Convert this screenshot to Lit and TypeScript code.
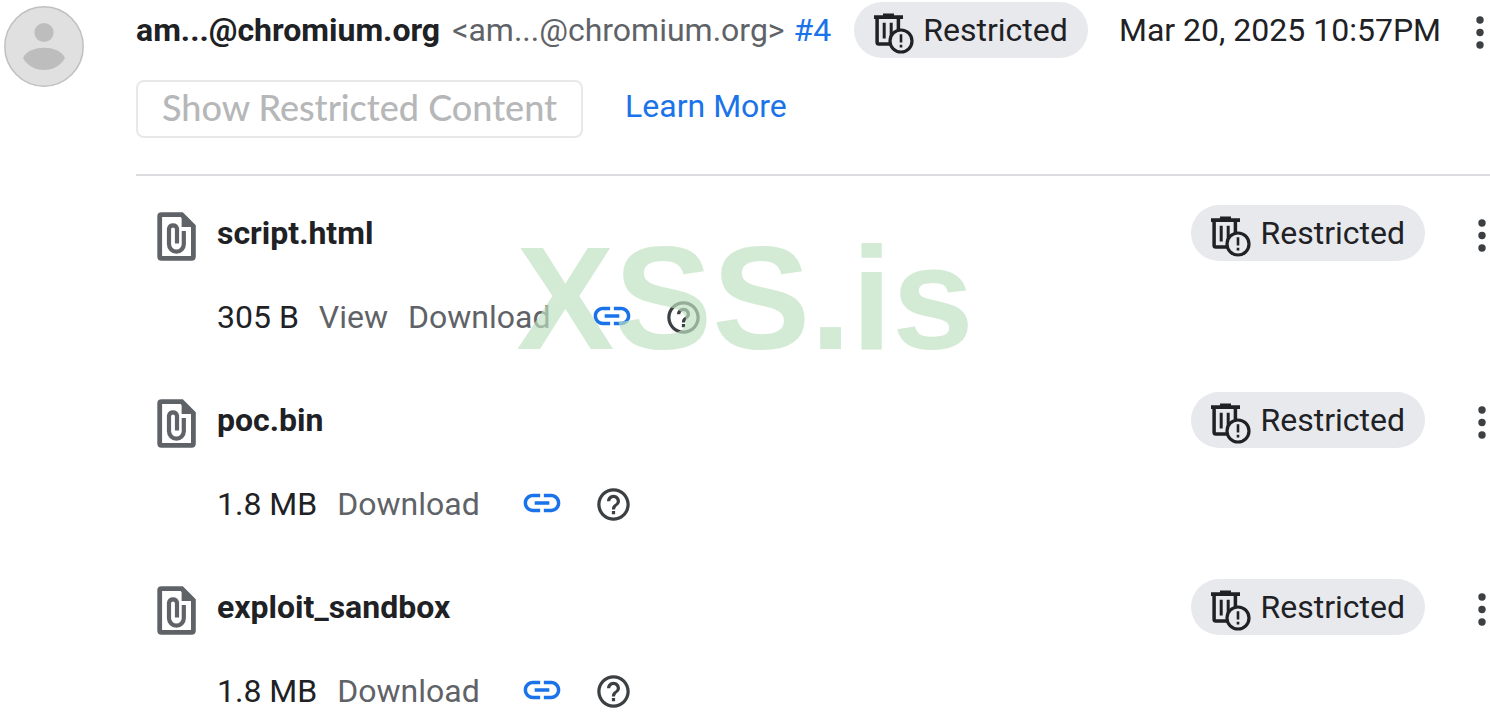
import { LitElement, html, css, svg } from "lit";
import { customElement, property } from "lit/decorators.js";

interface Attachment {
  name: string;
  size: string;
  viewable: boolean;
}

const ATTACHMENTS: Attachment[] = [
  { name: "script.html", size: "305 B", viewable: true },
  { name: "poc.bin", size: "1.8 MB", viewable: false },
  { name: "exploit_sandbox", size: "1.8 MB", viewable: false },
];

const dots = svg`
  <circle cx="4" cy="4" r="3.7" />
  <circle cx="4" cy="16.5" r="3.7" />
  <circle cx="4" cy="29" r="3.7" />
`;

@customElement("restricted-chip")
class RestrictedChip extends LitElement {
  static styles = css`
    :host {
      display: inline-flex;
      flex: none;
      align-items: center;
      box-sizing: border-box;
      height: 56px;
      padding: 0 20px;
      gap: 9px;
      border-radius: 28px;
      background: #e8e9ed;
      color: #202124;
      white-space: nowrap;
    }
    .icon {
      display: block;
      width: 40px;
      height: 41px;
      margin-top: 6px;
    }
  `;
  render() {
    return html`
      <svg class="icon" viewBox="0 0 40 41" fill="none" stroke="#202124" aria-hidden="true">
        <path d="M0 4.1H29M9 2.2H20" stroke-width="3.6" />
        <path d="M3.1 5V29.2Q3.1 31 4.9 31H22.6Q24.4 31 24.4 29.2V5" stroke-width="3.5" />
        <path d="M10.2 9.7V25.6M17.2 9.7V25.6" stroke-width="3" />
        <circle cx="27" cy="28" r="11" fill="#e8e9ed" stroke-width="3.2" />
        <path d="M27 21.2V29.4M27 31.8V34.4" stroke-width="2.6" />
      </svg>
      <span>Restricted</span>
    `;
  }
}

@customElement("attachment-item")
class AttachmentItem extends LitElement {
  @property({ attribute: false }) item!: Attachment;

  static styles = css`
    :host {
      display: block;
    }
    .top,
    .meta {
      display: flex;
      align-items: center;
      height: 56px;
    }
    .file {
      flex: none;
      width: 39px;
      height: 49px;
      margin: 6px 21px 0 21px;
    }
    .name {
      flex: 1;
      font-weight: 700;
      color: #202124;
    }
    .more {
      display: flex;
      flex: none;
      margin: 5px 4px 0 53px;
      padding: 0;
      border: 0;
      background: none;
      fill: #3c4043;
    }
    .meta {
      margin-top: 28px;
      padding-left: 81px;
      gap: 20px;
      color: #202124;
    }
    .action {
      color: #5f6368;
      text-decoration: none;
    }
    .link {
      display: flex;
      margin: 0 10px 2px 20px;
    }
    .help {
      display: flex;
      padding: 0;
      border: 0;
      background: none;
    }
  `;
  render() {
    const { name, size, viewable } = this.item;
    return html`
      <div class="top">
        <svg class="file" viewBox="0 0 39 49" fill="none" stroke="#5f6368" aria-hidden="true">
          <path d="M2.7 4.5Q2.7 2.7 4.5 2.7H24.8L36.4 14.3V44.5Q36.4 46.300 34.6 46.300H4.5Q2.7 46.300 2.7 44.5Z" stroke-width="4.8" />
          <path d="M24.600 1V15H38Z" fill="#5f6368" stroke="none" />
          <path d="M26.8 19V32.2A7.4 7.4 0 0 1 12 32.2V16.6A4.1 4.1 0 0 1 20 16.6V31.6" stroke-width="4.2" />
        </svg>
        <span class="name">${name}</span>
        <restricted-chip></restricted-chip>
        <button class="more" aria-label="More options">
          <svg width="8" height="33" viewBox="0 0 8 33">${dots}</svg>
        </button>
      </div>
      <div class="meta">
        <span>${size}</span>
        ${viewable ? html`<a class="action" href="#view">View</a>` : null}
        <a class="action" href="#download">Download</a>
        <a class="link" href="#link" aria-label="Copy link">
          <svg width="44" height="44" viewBox="0 0 24 24" fill="#1a73e8">
            <path d="M3.9 12c0-1.71 1.39-3.1 3.1-3.1h4V7H7c-2.76 0-5 2.24-5 5s2.24 5 5 5h4v-1.9H7c-1.71 0-3.1-1.39-3.1-3.1zM8 13h8v-2H8v2zm9-6h-4v1.9h4c1.71 0 3.1 1.39 3.1 3.1s-1.39 3.1-3.1 3.1h-4V17h4c2.76 0 5-2.24 5-5s-2.24-5-5-5z" />
          </svg>
        </a>
        <button class="help" aria-label="Help">
          <svg width="39" height="39" viewBox="0 0 24 24" fill="#3c4043">
            <path d="M11 18h2v-2h-2v2zm1-16C6.48 2 2 6.48 2 12s4.48 10 10 10 10-4.48 10-10S17.52 2 12 2zm0 18c-4.41 0-8-3.59-8-8s3.59-8 8-8 8 3.59 8 8-3.59 8-8 8zm0-14c-2.21 0-4 1.79-4 4h2c0-1.1.9-2 2-2s2 .9 2 2c0 2-3 1.75-3 5h2c0-2.25 3-2.5 3-5 0-2.21-1.79-4-4-4z" />
          </svg>
        </button>
      </div>
    `;
  }
}

@customElement("app-root")
class AppRoot extends LitElement {
  static styles = css`
    :host {
      display: block;
      position: relative;
      min-height: 100vh;
      overflow: hidden;
      background: #fff;
      font: 400 32px/40px Roboto, "Liberation Sans", sans-serif;
      color: #202124;
    }
    .comment {
      display: flex;
      gap: 52px;
      padding: 2px 0 0 4px;
    }
    .avatar {
      flex: none;
      width: 80px;
      height: 81px;
      margin-top: 4px;
    }
    .body {
      flex: 1;
      min-width: 0;
    }
    .head {
      display: flex;
      align-items: center;
      height: 56px;
      white-space: nowrap;
    }
    .author {
      font-weight: 700;
    }
    .email {
      margin-left: 12px;
      color: #5f6368;
    }
    .link {
      color: #1a73e8;
      text-decoration: none;
    }
    .number {
      margin: 0 23px 0 9px;
    }
    .date {
      margin-left: auto;
    }
    .more {
      display: flex;
      flex: none;
      margin: 5px 6px 0 35px;
      padding: 0;
      border: 0;
      background: none;
      fill: #3c4043;
    }
    .actions {
      display: flex;
      gap: 42px;
      margin-top: 22px;
      padding-bottom: 36px;
      border-bottom: 2px solid #dadce0;
    }
    .show {
      height: 58px;
      padding: 0 24px 4px;
      border: 2px solid #e8e8e8;
      border-radius: 8px;
      background: #fff;
      color: #b6b7b9;
      font: 500 36px/50px Lato, "Open Sans", sans-serif;
    }
    .learn {
      line-height: 52px;
    }
    .attachments {
      display: grid;
      gap: 47px;
      margin: 0;
      padding: 29px 0 0;
      list-style: none;
    }
    .watermark {
      position: absolute;
      top: 298px;
      left: 50%;
      transform: translate(-50%, -50%);
      font: 700 147px/148px "Liberation Sans", sans-serif;
      color: rgba(190, 224, 193, 0.68);
      white-space: nowrap;
      pointer-events: none;
    }
  `;
  render() {
    return html`
      <article class="comment">
        <svg class="avatar" viewBox="0 0 80 81" aria-hidden="true">
          <ellipse cx="40" cy="40.5" rx="39.2" ry="39.7" fill="#e0e0e0" stroke="#c0c0c4" stroke-width="1.5" />
          <circle cx="40" cy="26.5" r="9.6" fill="#bdbdbd" />
          <path d="M19 52C22 45 31 41.8 40 41.8S58 45 61 52C57 59.5 49 64 40 64S23 59.5 19 52Z" fill="#bdbdbd" />
        </svg>
        <div class="body">
          <header class="head">
            <span class="author">am...@chromium.org</span>
            <span class="email">&lt;am...@chromium.org&gt;</span>
            <a class="link number" href="#comment4">#4</a>
            <restricted-chip></restricted-chip>
            <time class="date" datetime="2025-03-20T22:57">Mar 20, 2025 10:57PM</time>
            <button class="more" aria-label="More options">
              <svg width="8" height="33" viewBox="0 0 8 33">${dots}</svg>
            </button>
          </header>
          <div class="actions">
            <button class="show" disabled>Show Restricted Content</button>
            <a class="link learn" href="#learn">Learn More</a>
          </div>
          <ul class="attachments">
            ${ATTACHMENTS.map((item) => html`<li><attachment-item .item=${item}></attachment-item></li>`)}
          </ul>
        </div>
      </article>
      <div class="watermark">XSS.is</div>
    `;
  }
}
